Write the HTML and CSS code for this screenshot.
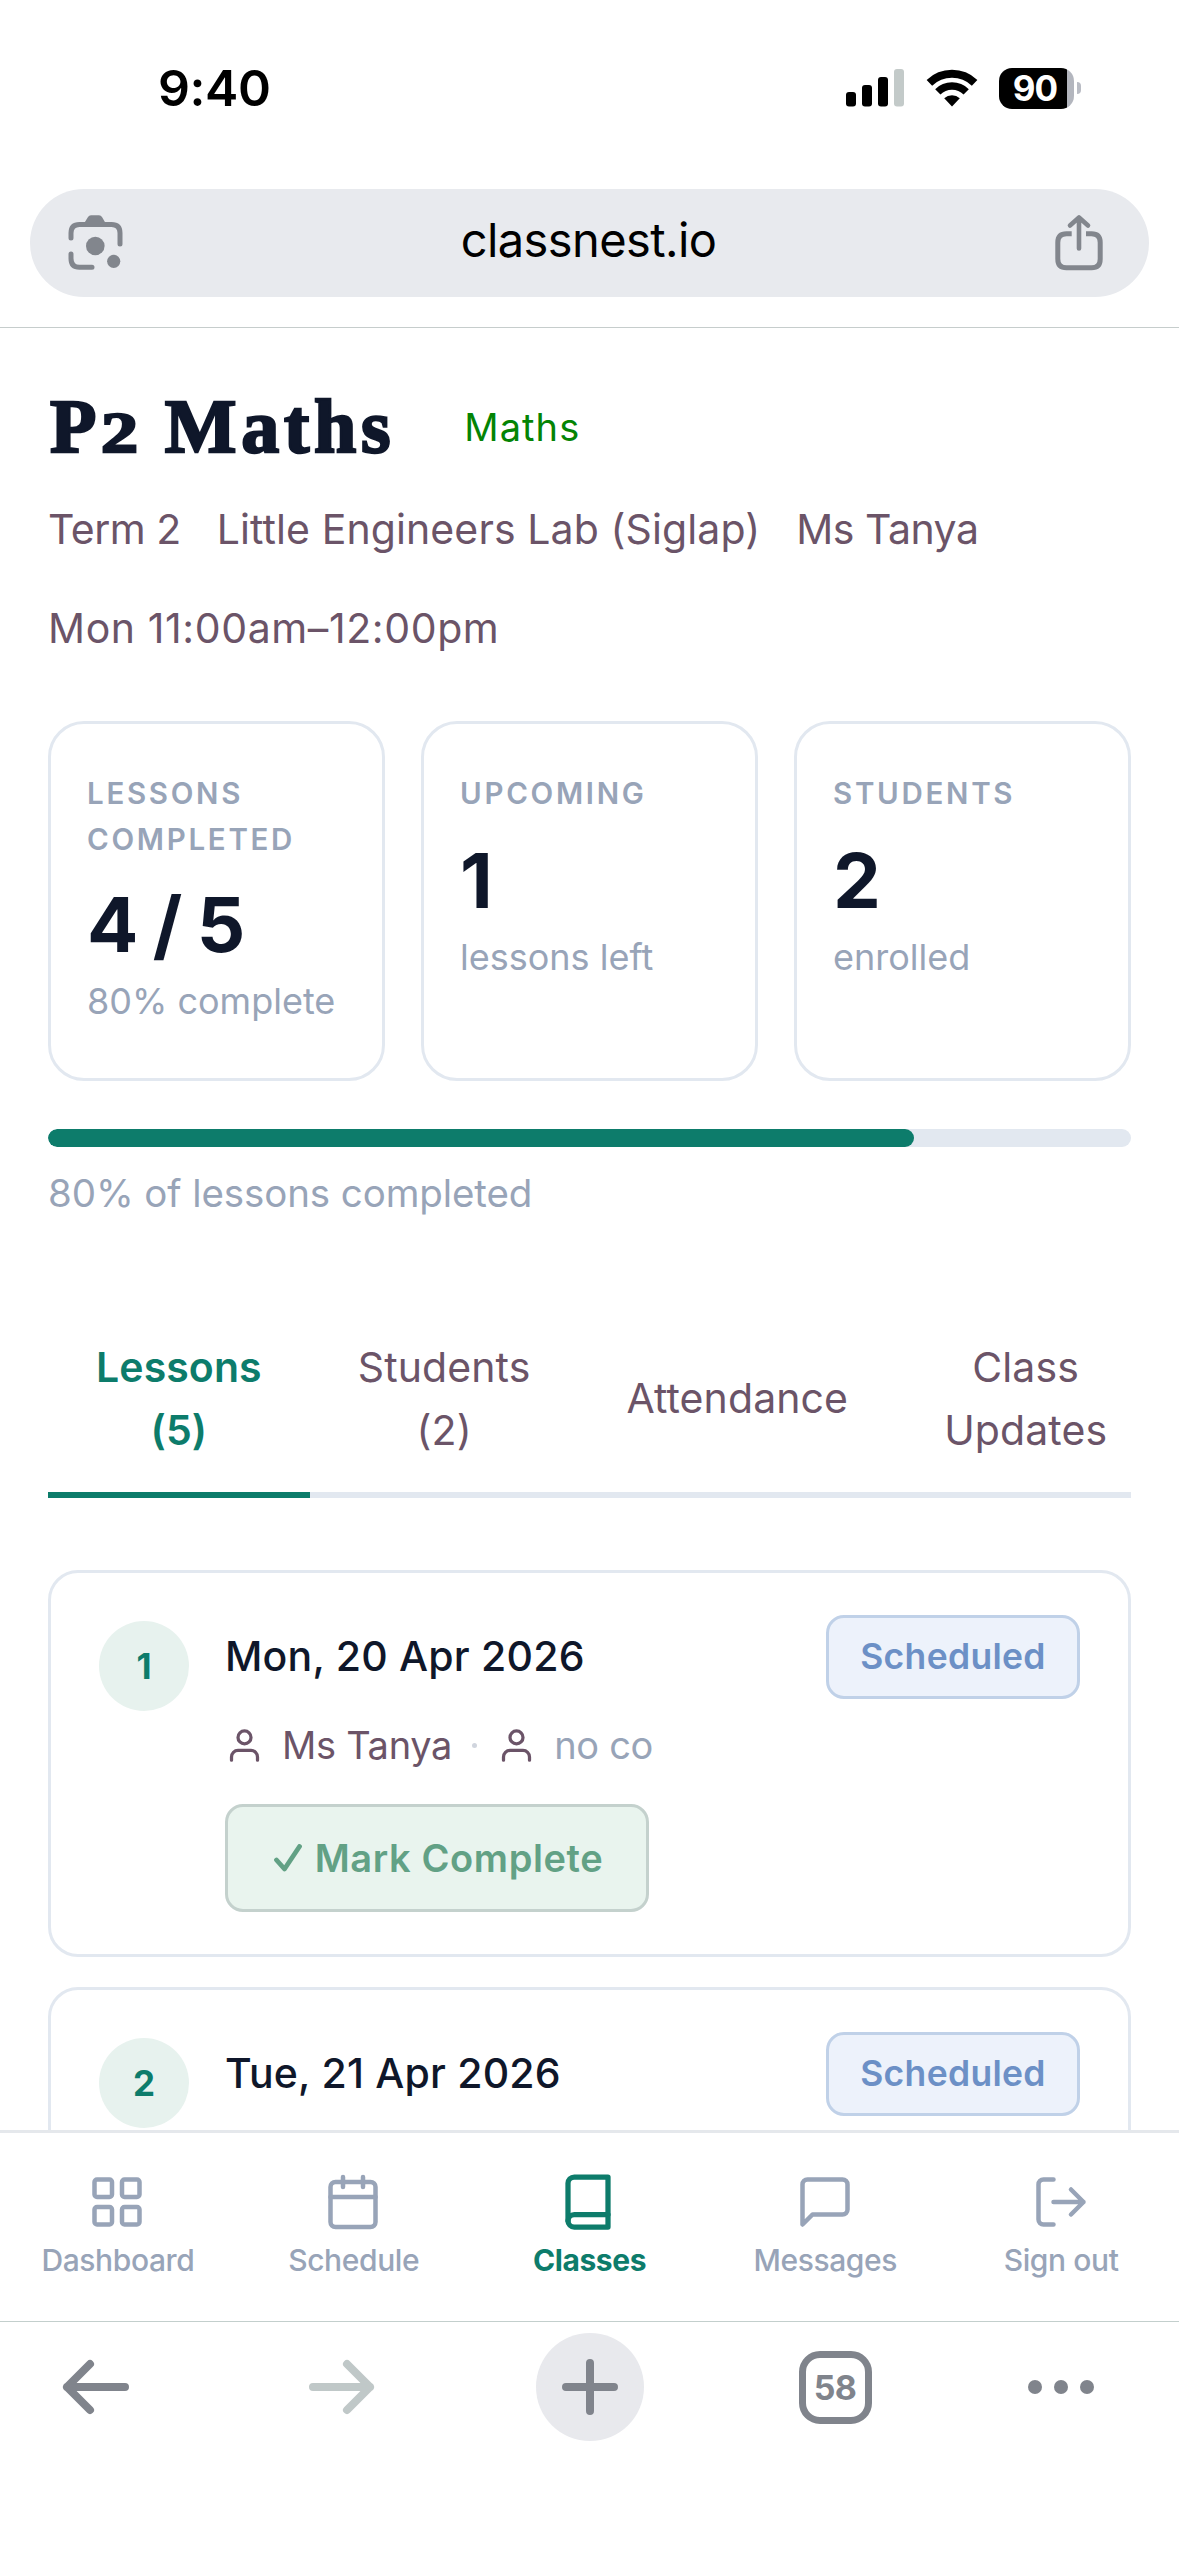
FILE: index.html
```html
<!DOCTYPE html>
<html lang="en">
<head>
    <meta charset="utf-8">
    <title>P2 Maths</title>
    <link rel="stylesheet" href="styles.css">
</head>
<body>
<div class="screen">
    <header class="top">
        <div class="status">
            <span class="time">9:40</span>
            <div class="status-icons">
                <svg class="signal" width="58" height="38" viewBox="0 0 58 38">
                    <rect x="0" y="23" width="10" height="14.500" rx="3"/>
                    <rect x="16" y="16" width="10" height="21.500" rx="3"/>
                    <rect x="32" y="8" width="10" height="29.500" rx="3"/>
                    <rect x="48" y="0" width="10" height="37.500" rx="3" fill="#c3cac9"/>
                </svg>
                <svg class="wifi" width="52" height="38" viewBox="0 0 52 38">
                    <path d="M3.400 13.900A32.800 32.800 0 0 1 48.600 13.900" fill="none" stroke="#000" stroke-width="8"/>
                    <path d="M11.800 22.900A20.300 20.300 0 0 1 40.200 22.900" fill="none" stroke="#000" stroke-width="7.500"/>
                    <path d="M26 37.500L18.200 29.200A12 12 0 0 1 33.800 29.200Z"/>
                </svg>
                <div class="battery"><span>90</span></div>
                <div class="battery-tip"></div>
            </div>
        </div>
        <div class="url-bar">
            <svg width="56" height="56" viewBox="0 0 56 56" fill="none" stroke="#82868d" stroke-width="5" stroke-linecap="round">
                <path d="M4 24V19Q4 10.500 12.500 10.500H44.500Q53 10.500 53 19V30"/>
                <path d="M4 40V44.500Q4 53.300 12.500 53.300H25"/>
                <path d="M17.300 9L21 3Q22 1.300 24 1.300H32Q34 1.300 35 3L38.500 9Z" fill="#82868d" stroke="none"/>
                <circle cx="28.300" cy="32" r="9.300" fill="#82868d" stroke="none"/>
                <circle cx="46.700" cy="47.300" r="6.600" fill="#82868d" stroke="none"/>
            </svg>
            <span class="url">classnest.io</span>
            <svg width="50" height="58" viewBox="0 0 50 58" fill="none" stroke="#82868d" stroke-width="5">
                <path d="M17.700 20.800H12.500Q3.800 20.800 3.800 29.500V46Q3.800 54.800 12.500 54.800H37.500Q46.200 54.800 46.200 46V29.500Q46.200 20.800 37.500 20.800H32"/>
                <path d="M25 35.500V5M16 12.500L25 4.500L34 12.500" stroke-width="4.600" stroke-linecap="round" stroke-linejoin="round"/>
            </svg>
        </div>
    </header>

    <main class="content">
        <div class="title-row">
            <h1>P<span class="oldstyle">2</span> Maths</h1>
            <span class="subject">Maths</span>
        </div>
        <div class="meta">
            <span class="meta-term">Term 2</span>
            <span>Little Engineers Lab (Siglap)</span>
            <span class="meta-term">Ms Tanya</span>
            <span class="meta-time">Mon 11:00am–12:00pm</span>
        </div>

        <div class="stats">
            <div class="stat">
                <div class="stat-label">Lessons Completed</div>
                <div class="stat-value">4 / 5</div>
                <div class="stat-sub">80% complete</div>
            </div>
            <div class="stat">
                <div class="stat-label">Upcoming</div>
                <div class="stat-value">1</div>
                <div class="stat-sub">lessons left</div>
            </div>
            <div class="stat">
                <div class="stat-label">Students</div>
                <div class="stat-value">2</div>
                <div class="stat-sub">enrolled</div>
            </div>
        </div>

        <div class="progress"><div class="progress-fill" style="width:80%"></div></div>
        <div class="progress-text">80% of lessons completed</div>

        <div class="tabs">
            <div class="tab active">Lessons<br>(5)</div>
            <div class="tab">Students<br>(2)</div>
            <div class="tab">Attendance</div>
            <div class="tab">Class<br>Updates</div>
        </div>

        <div class="lessons">
            <div class="lesson">
                <div class="num">1</div>
                <div class="lesson-body">
                    <div class="lesson-date">Mon, 20 Apr 2026</div>
                    <div class="people">
                        <svg class="icon" viewBox="0 0 24 24"><path d="M20 21v-2a4 4 0 0 0-4-4H8a4 4 0 0 0-4 4v2"/><circle cx="12" cy="7" r="4"/></svg>
                        <span>Ms Tanya</span>
                        <i class="dot"></i>
                        <svg class="icon" viewBox="0 0 24 24"><path d="M20 21v-2a4 4 0 0 0-4-4H8a4 4 0 0 0-4 4v2"/><circle cx="12" cy="7" r="4"/></svg>
                        <span class="muted">no co</span>
                    </div>
                    <button class="mark">
                        <svg width="28" height="28" viewBox="0 0 28 28"><path d="M2.500 16L10.500 25L25.500 2.500"/></svg>
                        <span>Mark Complete</span>
                    </button>
                </div>
                <div class="badge">Scheduled</div>
            </div>
            <div class="lesson">
                <div class="num">2</div>
                <div class="lesson-body">
                    <div class="lesson-date">Tue, 21 Apr 2026</div>
                </div>
                <div class="badge">Scheduled</div>
            </div>
        </div>
    </main>

    <nav class="bottom-nav">
        <div class="nav-item">
            <svg class="icon" viewBox="0 0 24 24"><rect x="3" y="3" width="7" height="7" rx="1"/><rect x="14" y="3" width="7" height="7" rx="1"/><rect x="3" y="14" width="7" height="7" rx="1"/><rect x="14" y="14" width="7" height="7" rx="1"/></svg>
            <span>Dashboard</span>
        </div>
        <div class="nav-item">
            <svg class="icon" viewBox="0 0 24 24"><rect x="3" y="4" width="18" height="18" rx="2"/><path d="M16 2v4M8 2v4M3 10h18"/></svg>
            <span>Schedule</span>
        </div>
        <div class="nav-item active">
            <svg class="icon" viewBox="0 0 24 24"><path d="M4 19.500A2.500 2.500 0 0 1 6.500 17H20"/><path d="M6.500 2H20v20H6.500A2.500 2.500 0 0 1 4 19.500v-15A2.500 2.500 0 0 1 6.500 2z"/></svg>
            <span>Classes</span>
        </div>
        <div class="nav-item">
            <svg class="icon" viewBox="0 0 24 24"><path d="M21 15a2 2 0 0 1-2 2H7l-4 4V5a2 2 0 0 1 2-2h14a2 2 0 0 1 2 2z"/></svg>
            <span>Messages</span>
        </div>
        <div class="nav-item">
            <svg class="icon" viewBox="0 0 24 24"><path d="M9 21H5a2 2 0 0 1-2-2V5a2 2 0 0 1 2-2h4M16 17l5-5-5-5M21 12H9"/></svg>
            <span>Sign out</span>
        </div>
    </nav>

    <footer class="toolbar">
        <svg width="68" height="56" viewBox="0 0 68 56"><path d="M64 28H6M29 5L6 28L29 51"/></svg>
        <svg class="disabled" width="68" height="56" viewBox="0 0 68 56"><path d="M5 28H62M39 5L62 28L39 51"/></svg>
        <div class="new-tab">
            <svg width="56" height="56" viewBox="0 0 56 56"><path d="M28 4V52M4 28H52"/></svg>
        </div>
        <div class="tab-count">58</div>
        <svg class="more" width="68" height="16" viewBox="0 0 68 16"><circle cx="8" cy="8" r="7"/><circle cx="34" cy="8" r="7"/><circle cx="60" cy="8" r="7"/></svg>
    </footer>
</div>
</body>
</html>
```

FILE: styles.css
```css
* {
    box-sizing: border-box;
}
body {
    margin: 0;
    background: #fff;
    font-family: Inter, "Liberation Sans", sans-serif;
    color: #0f172a;
}
svg {
    display: block;
    flex: none;
}
.screen {
    width: 1179px;
    height: 2556px;
    display: flex;
    flex-direction: column;
    overflow: hidden;
}

/* status bar + address bar */
.top {
    flex: none;
    height: 328px;
    border-bottom: 1px solid #c6cdcc;
}
.status {
    height: 176px;
    padding: 0 98px 0 158px;
    display: flex;
    align-items: center;
    justify-content: space-between;
    color: #000;
}
.time {
    font-size: 50px;
    font-weight: 600;
    letter-spacing: -0.4px;
}
.status-icons {
    display: flex;
    align-items: center;
}
.wifi {
    margin: 0 21px 0 22px;
}
.battery {
    width: 75px;
    height: 41px;
    padding-right: 3px;
    border-radius: 13px;
    background: linear-gradient(to right, #000 68px, #b3b6be 68px);
    color: #fff;
    font-size: 35px;
    font-weight: 700;
    letter-spacing: -1px;
    line-height: 41px;
    text-align: center;
}
.battery-tip {
    width: 4px;
    height: 12px;
    margin-left: 3px;
    border-radius: 0 4px 4px 0;
    background: #b9bcc4;
}
.url-bar {
    margin: 13px 30px 0;
    height: 108px;
    padding: 0 45px 2px 37px;
    border-radius: 54px;
    background: #e8eaee;
    display: flex;
    align-items: center;
    justify-content: space-between;
}
.url {
    color: #000;
    font-size: 47px;
    letter-spacing: -0.6px;
    line-height: 60px;
    padding-bottom: 4px;
}

/* page */
.content {
    flex: 1;
    min-height: 0;
    overflow: hidden;
    padding: 50px 48px 0;
}
.title-row {
    display: flex;
    align-items: center;
    height: 96px;
    gap: 69px;
}
h1 {
    margin: 0 0 0 2px;
    font-family: "Liberation Serif", serif;
    font-size: 76px;
    line-height: 96px;
    letter-spacing: 4.7px;
    -webkit-text-stroke: 2.4px #0f172a;
    white-space: nowrap;
}
.oldstyle {
    font-size: 57px;
    margin-right: 3px;
    display: inline-block;
    line-height: 1;
    transform: scaleX(1.3);
    transform-origin: left;
    width: 37px;
}
.subject {
    color: #048404;
    font-size: 38px;
    letter-spacing: 1.1px;
    line-height: 60px;
    padding-top: 2px;
}
.meta {
    display: flex;
    flex-wrap: wrap;
    gap: 36px;
    margin-top: 24px;
    color: #6b5468;
    font-size: 41px;
    line-height: 63px;
    letter-spacing: 0.1px;
}
.meta-term {
    letter-spacing: -0.5px;
}
.meta-time {
    letter-spacing: 0.6px;
}
.stats {
    display: grid;
    grid-template-columns: repeat(3, 1fr);
    gap: 36px;
    margin-top: 61px;
}
.stat {
    height: 360px;
    padding: 47px 36px 0;
    border: 3px solid #e2e8f0;
    border-radius: 36px;
}
.stat-label {
    color: #98a4b8;
    font-size: 29.5px;
    font-weight: 600;
    line-height: 45.5px;
    letter-spacing: 2.7px;
    text-transform: uppercase;
}
.stat-value {
    margin-top: 17px;
    font-size: 76px;
    font-weight: 700;
    line-height: 90px;
    letter-spacing: -1.8px;
}
.stat:not(:first-child) .stat-value {
    margin-top: 18px;
}
.stat-sub {
    margin-top: 5px;
    color: #98a4b8;
    font-size: 36px;
    line-height: 54px;
    letter-spacing: 0;
    white-space: nowrap;
}
.progress {
    height: 18px;
    margin-top: 48px;
    border-radius: 9px;
    background: #e2e8f0;
    overflow: hidden;
}
.progress-fill {
    height: 100%;
    border-radius: 9px;
    background: #0d7c6b;
}
.progress-text {
    margin-top: 17px;
    color: #98a4b8;
    font-size: 38.5px;
    line-height: 58px;
    letter-spacing: -0.1px;
}
.tabs {
    display: flex;
    margin-top: 83px;
    height: 193px;
    overflow: hidden;
}
.tab {
    flex: none;
    display: flex;
    align-items: center;
    justify-content: center;
    padding: 0 48px;
    border-bottom: 6px solid #e2e8f0;
    color: #6b5468;
    font-size: 41px;
    line-height: 63px;
    letter-spacing: 0.1px;
    text-align: center;
}
.tab.active {
    color: #0d7c6b;
    font-weight: 600;
    border-color: #0d7c6b;
}
.lessons {
    display: flex;
    flex-direction: column;
    gap: 30px;
    margin-top: 72px;
}
.lesson {
    display: flex;
    align-items: flex-start;
    height: 387px;
    padding: 42px 48px;
    border: 3px solid #e2e8f0;
    border-radius: 30px;
}
.num {
    width: 90px;
    height: 90px;
    margin: 6px 36px 0 0;
    border-radius: 50%;
    background: #e7f2ee;
    color: #0d7c6b;
    font-size: 35px;
    font-weight: 700;
    line-height: 90px;
    text-align: center;
}
.lesson-body {
    flex: 1;
    padding-top: 10px;
}
.lesson-date {
    font-size: 41px;
    font-weight: 500;
    line-height: 63px;
    letter-spacing: 0.2px;
}
.people {
    display: flex;
    align-items: center;
    margin-top: 28px;
    color: #6b5468;
    font-size: 38px;
    line-height: 58px;
    letter-spacing: -0.3px;
}
.icon {
    fill: none;
    stroke: currentColor;
    stroke-width: 2;
    stroke-linecap: round;
    stroke-linejoin: round;
}
.people .icon {
    width: 39px;
    height: 39px;
    margin-right: 18px;
}
.dot {
    width: 5px;
    height: 5px;
    margin: 0 20px;
    border-radius: 50%;
    background: #d0d5de;
}
.muted {
    color: #98a4b8;
}
.mark {
    display: flex;
    align-items: center;
    justify-content: center;
    gap: 13px;
    width: 424px;
    height: 108px;
    margin: 30px 0 0;
    padding: 0 0 0 3px;
    border: 3px solid #c4d1cd;
    border-radius: 18px;
    background: #e9f4ee;
    color: #62a185;
    font: 600 38px Inter, sans-serif;
    letter-spacing: 0.6px;
}
.mark svg {
    fill: none;
    stroke: #62a185;
    stroke-width: 4.8;
    stroke-linecap: round;
    stroke-linejoin: round;
}
.badge {
    width: 254px;
    height: 84px;
    border: 3px solid #c0d1e8;
    border-radius: 18px;
    background: #edf2fb;
    color: #6c90c6;
    font-size: 35.5px;
    font-weight: 600;
    line-height: 78px;
    letter-spacing: 0.3px;
    text-align: center;
}

/* app navigation */
.bottom-nav {
    flex: none;
    display: grid;
    grid-template-columns: repeat(5, 1fr);
    height: 191px;
    padding-top: 39px;
    border-top: 3px solid #e5e8ec;
}
.nav-item {
    display: flex;
    flex-direction: column;
    align-items: center;
    gap: 10px;
    color: #98a4b8;
    font-size: 30px;
    font-weight: 500;
    line-height: 36px;
    letter-spacing: -0.4px;
}
.nav-item .icon {
    width: 60px;
    height: 60px;
    margin-right: 1px;
    stroke-width: 1.8;
}
.nav-item.active {
    color: #0d7c6b;
    font-weight: 700;
}
.nav-item.active .icon {
    margin-right: 3px;
    stroke-width: 2.1;
}

/* browser toolbar */
.toolbar {
    flex: none;
    display: grid;
    grid-template-columns: 190px 304px 192px 298px 153px;
    align-items: center;
    justify-items: center;
    align-content: start;
    height: 235px;
    padding-top: 11px;
    border-top: 1px solid #c3cfcd;
}
.toolbar svg {
    fill: none;
    stroke: #80848c;
    stroke-width: 8;
    stroke-linecap: round;
    stroke-linejoin: round;
}
.toolbar .disabled {
    stroke: #c0c8c8;
}
.toolbar .more {
    fill: #80848c;
    stroke: none;
}
.new-tab {
    width: 108px;
    height: 108px;
    border-radius: 50%;
    background: #e8e9ed;
    display: flex;
    align-items: center;
    justify-content: center;
}
.tab-count {
    width: 73px;
    height: 73px;
    border: 7px solid #80848c;
    border-radius: 21px;
    color: #80848c;
    font-size: 34px;
    font-weight: 700;
    line-height: 60px;
    letter-spacing: -0.7px;
    text-align: center;
}
```
